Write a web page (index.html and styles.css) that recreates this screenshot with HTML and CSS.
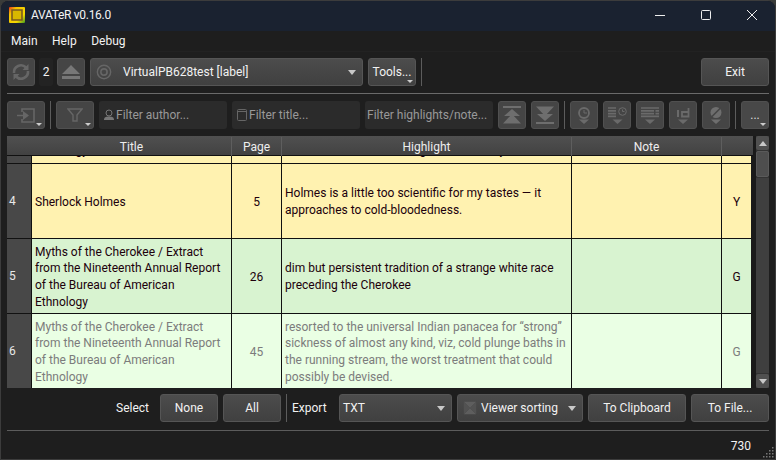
FILE: index.html
```html
<!DOCTYPE html>
<html lang="en">
<head>
    <meta charset="UTF-8">
    <meta name="viewport" content="width=device-width, initial-scale=1.0">
    <title>AVATeR v0.16.0</title>
    <link rel="stylesheet" href="styles.css">
</head>
<body>
<div class="window">
    <div class="titlebar">
        <svg class="appicon" width="16" height="16" viewBox="0 0 16 16">
            <defs>
                <linearGradient id="logo" x1="0" y1="0" x2="1" y2="1">
                    <stop offset="0" stop-color="#e8301c"/>
                    <stop offset="0.25" stop-color="#f6c400"/>
                    <stop offset="0.7" stop-color="#f4d800"/>
                    <stop offset="1" stop-color="#3f9a20"/>
                </linearGradient>
            </defs>
            <rect width="16" height="16" rx="1" fill="url(#logo)"/>
            <path d="M3 3h10v10H3z" fill="#d8b800" stroke="#7a5a20" stroke-width="1.6"/>
        </svg>
        <span class="apptitle">AVATeR v0.16.0</span>
        <div class="wincontrols">
            <svg width="12" height="12" viewBox="0 0 12 12"><path d="M1 6.5h10" stroke="#eee" fill="none"/></svg>
            <svg width="12" height="12" viewBox="0 0 12 12"><rect x="1.5" y="1.5" width="9" height="9" rx="1" stroke="#eee" fill="none"/></svg>
            <svg width="12" height="12" viewBox="0 0 12 12"><path d="M1 1l10 10M11 1L1 11" stroke="#eee" fill="none"/></svg>
        </div>
    </div>

    <div class="menubar">
        <span>Main</span>
        <span>Help</span>
        <span>Debug</span>
    </div>

    <div class="content">
        <div class="toolbar first">
            <button class="btn icon" type="button">
                <svg width="22" height="22" viewBox="0 0 22 22"><path d="M4 12a7 7 0 0 1 12-5.5M18 10a7 7 0 0 1-12 5.5" stroke="#666" stroke-width="2.6" fill="none"/><path d="M18.5 3v6h-6zM3.5 19v-6h6z" fill="#666"/></svg>
            </button>
            <span class="count">2</span>
            <button class="btn icon" type="button">
                <svg width="20" height="18" viewBox="0 0 20 18"><path d="M10 2l9 9H1zM1 13h18v3H1z" fill="#777"/></svg>
            </button>
            <button class="btn combo device" type="button">
                <svg width="16" height="16" viewBox="0 0 18 18"><circle cx="9" cy="9" r="7.5" stroke="#666" stroke-width="1.6" fill="none"/><circle cx="9" cy="9" r="3.5" stroke="#666" stroke-width="1.8" fill="none"/></svg>
                <span class="combotext">VirtualPB628test [label]</span>
                <i class="arrow"></i>
            </button>
            <button class="btn tools menu" type="button">Tools...</button>
            <span class="sep"></span>
            <button class="btn exit" type="button">Exit</button>
        </div>

        <div class="rule"></div>

        <div class="toolbar second">
            <button class="btn wide menu" type="button">
                <svg width="18" height="15" viewBox="0 0 18 15"><path d="M5 4V1h12v13H5v-3" stroke="#666" stroke-width="1.6" fill="none"/><path d="M0 7.5h6" stroke="#666" stroke-width="1.6"/><path d="M6 3l6 4.5-6 4.5z" fill="#666"/></svg>
            </button>
            <span class="sep"></span>
            <button class="btn wide menu" type="button">
                <svg width="16" height="14" viewBox="0 0 16 14"><path d="M1 1h14l-5 6v6H6V7z" stroke="#666" stroke-width="1.4" fill="none"/></svg>
            </button>
            <div class="filter">
                <svg width="12" height="12" viewBox="0 0 12 12"><circle cx="5" cy="4" r="3" stroke="#777" fill="none"/><path d="M0 11c0-3 2-3.5 5-3.5s5 .5 5 3.5z" fill="#777"/></svg>
                <span>Filter author...</span>
            </div>
            <div class="filter">
                <svg width="12" height="12" viewBox="0 0 12 12"><rect x="0.5" y="0.5" width="9" height="11" rx="1" stroke="#666" fill="none"/><path d="M1 2.5h8" stroke="#666"/></svg>
                <span>Filter title...</span>
            </div>
            <div class="filter plain"><span>Filter highlights/note...</span></div>
            <button class="btn icon" type="button">
                <svg width="20" height="20" viewBox="0 0 20 20"><path d="M1 1h18v2H1zM10 4l8 7H2zM10 9l9 9.500H1z" fill="#6e6e6e"/></svg>
            </button>
            <button class="btn icon" type="button">
                <svg width="20" height="20" viewBox="0 0 20 20"><path d="M1 17h18v2H1zM10 16l8-7H2zM10 11L19 1.500H1z" fill="#6e6e6e"/></svg>
            </button>
            <span class="sep"></span>
            <button class="btn icon" type="button">
                <svg width="20" height="20" viewBox="0 0 20 20"><circle cx="10" cy="8" r="5" stroke="#6a6a6a" stroke-width="1.8" fill="none"/><path d="M10 5v3h3" stroke="#6a6a6a" fill="none"/><path d="M5 14.500h10L10 19z" fill="#6a6a6a"/></svg>
            </button>
            <button class="btn icon" type="button">
                <svg width="20" height="20" viewBox="0 0 20 20"><path d="M1 3h8M1 5.800h8M1 8.600h8M1 11.400h8" stroke="#6a6a6a" stroke-width="1.7"/><circle cx="15.500" cy="6.500" r="3.800" stroke="#6a6a6a" fill="none"/><path d="M15.500 4.500v2h2" stroke="#6a6a6a" fill="none"/><path d="M5.500 14.500h10L10.500 19z" fill="#6a6a6a"/></svg>
            </button>
            <button class="btn icon" type="button">
                <svg width="20" height="20" viewBox="0 0 20 20"><path d="M1 3h18M1 5.800h13M15.500 5.800H19M1 8.600h13M15.500 8.600H19M1 11.400h18" stroke="#6a6a6a" stroke-width="1.7"/><path d="M5 14.500h10L10 19z" fill="#6a6a6a"/></svg>
            </button>
            <button class="btn icon" type="button">
                <svg width="20" height="20" viewBox="0 0 20 20"><path d="M5 5v7" stroke="#6a6a6a" stroke-width="2"/><path d="M15.500 3v8.500H9V7h6.500" stroke="#6a6a6a" stroke-width="1.8" fill="none"/><path d="M5 14.500h10L10 19z" fill="#6a6a6a"/></svg>
            </button>
            <button class="btn icon" type="button">
                <svg width="20" height="20" viewBox="0 0 20 20"><circle cx="10" cy="7.500" r="5.500" fill="#6e6e6e"/><path d="M5.500 12L14.500 3" stroke="#464646" stroke-width="1.600"/><path d="M5 14.500h10L10 19z" fill="#6e6e6e"/></svg>
            </button>
            <span class="sep"></span>
            <button class="btn icon menu more" type="button">...</button>
        </div>

        <div class="tablewrap">
            <div class="table">
                <div class="row head">
                    <div></div>
                    <div>Title</div>
                    <div>Page</div>
                    <div>Highlight</div>
                    <div>Note</div>
                    <div></div>
                </div>
                <div class="tbody">
                    <div class="row yellow cut">
                        <div class="num"></div>
                        <div class="cell"><span>Ethnology</span></div>
                        <div class="cell mid"></div>
                        <div class="cell"><span>that he had known nothing as to the story</span></div>
                        <div class="cell"></div>
                        <div class="cell mid"></div>
                    </div>
                    <div class="row yellow">
                        <div class="num">4</div>
                        <div class="cell">Sherlock Holmes</div>
                        <div class="cell mid">5</div>
                        <div class="cell">Holmes is a little too scientific for my tastes — it approaches to cold-bloodedness.</div>
                        <div class="cell"></div>
                        <div class="cell mid">Y</div>
                    </div>
                    <div class="row green">
                        <div class="num">5</div>
                        <div class="cell">Myths of the Cherokee / Extract from the Nineteenth Annual Report of the Bureau of American Ethnology</div>
                        <div class="cell mid">26</div>
                        <div class="cell">dim but persistent tradition of a strange white race preceding the Cherokee</div>
                        <div class="cell"></div>
                        <div class="cell mid">G</div>
                    </div>
                    <div class="row pale">
                        <div class="num">6</div>
                        <div class="cell">Myths of the Cherokee / Extract from the Nineteenth Annual Report of the Bureau of American Ethnology</div>
                        <div class="cell mid">45</div>
                        <div class="cell">resorted to the universal Indian panacea for “strong” sickness of almost any kind, viz, cold plunge baths in the running stream, the worst treatment that could possibly be devised.</div>
                        <div class="cell"></div>
                        <div class="cell mid">G</div>
                    </div>
                </div>
            </div>
            <div class="scrollbar">
                <div class="sb-btn"><i class="arrow up"></i></div>
                <div class="sb-thumb"></div>
                <div class="sb-track"></div>
                <div class="sb-btn"><i class="arrow"></i></div>
            </div>
        </div>

        <div class="toolbar bottom">
            <span class="label select">Select</span>
            <button class="btn none" type="button">None</button>
            <button class="btn none" type="button">All</button>
            <span class="sep"></span>
            <span class="label export">Export</span>
            <button class="btn combo txt" type="button"><span class="combotext">TXT</span><i class="arrow"></i></button>
            <button class="btn combo sorting" type="button">
                <svg width="14" height="14" viewBox="0 0 18 18"><path d="M1 1h16L9 9zM1 17h16L9 9z" fill="#5e5e5e"/><path d="M1 1v16l8-8zM17 1v16l-8-8z" fill="#525252"/></svg>
                <span class="combotext">Viewer sorting</span>
                <i class="arrow"></i>
            </button>
            <button class="btn clip" type="button">To Clipboard</button>
            <button class="btn tofile" type="button">To File...</button>
        </div>

        <div class="rule lower"></div>

        <div class="statusbar">
            <span>730</span>
            <svg class="grip" width="12" height="12" viewBox="0 0 12 12"><path d="M10 1h1.5v1.500H10zM7 4h1.500v1.500H7zM10 4h1.500v1.500H10zM4 7h1.500v1.500H4zM7 7h1.500v1.500H7zM10 7h1.500v1.500H10zM1 10h1.500v1.500H1zM4 10h1.500v1.500H4zM7 10h1.500v1.500H7zM10 10h1.500v1.500H10z" fill="#777"/></svg>
        </div>
    </div>
</div>
</body>
</html>
```

FILE: styles.css
```css
* {box-sizing: border-box}
html, body {margin: 0; height: 100%; overflow: hidden}
body {background: #3a3c3a; font-family: Roboto, "Noto Sans", sans-serif; font-size: 12px; color: #f2f2f2}

.window {height: 460px; border: 1px solid #3c3c3c; border-radius: 8px 8px 0 0; background: #1e1e1e; overflow: hidden}

.titlebar {height: 30px; background: #1a2230; display: flex; align-items: center; padding: 0 0 2px 8px}
.appicon {display: block}
.apptitle {margin-left: 6px; color: #f4f4f4; letter-spacing: -0.3px}
.wincontrols {margin-left: auto; display: flex; gap: 34px; padding-right: 17px}
.wincontrols svg {display: block}

.menubar {height: 21px; display: flex; align-items: center; gap: 14.5px; padding-left: 10px; background: #1e1e1e; border-bottom: 1px solid #222}

.content {padding: 0 6px}

.toolbar {display: flex; align-items: center; gap: 5px; height: 28px}
.first {margin-top: 6px}
.second {margin-top: 7px}
.bottom {margin-top: 6px}

.btn {height: 28px; padding: 0; border: 1px solid #555; border-radius: 3px; background: linear-gradient(#4c4c4c, #404040); color: #f2f2f2; font: inherit; display: flex; align-items: center; justify-content: center; position: relative}
.icon {width: 28px; border-color: #505050; background: #454545}
.wide {width: 38px; border-color: #505050; background: #454545}
.tools {width: 48px}
.exit {width: 68px; margin-left: auto}
.none {width: 58px}
.clip {width: 98px}
.tofile {width: 78px}
.more {color: #ddd; align-items: flex-end; padding-bottom: 6px; background: #484848}

.menu::after {content: ""; position: absolute; right: 2px; bottom: 2px; border: 3px solid transparent; border-top-color: #ccc; border-bottom: 0}

.combo {justify-content: flex-start; padding: 0 6px 0 3px}
.device {width: 273px; padding-left: 5px}
.device .combotext {margin-left: 11px}
.txt {width: 113px}
.sorting {width: 126px; padding-left: 5px}
.sorting .combotext {margin-left: 4px}
.arrow {margin-left: auto; display: block; width: 0; height: 0; border: 4px solid transparent; border-top: 5px solid #c8c8c8; border-bottom: 0}
.arrow.up {border-top: 0; border-bottom: 5px solid #c8c8c8}
.sb-btn .arrow {margin: 0}

.count {width: 14px; height: 28px; margin: 0 -1px; background: #232323; border-radius: 2px; display: flex; align-items: center; justify-content: center}
.sep {width: 1px; height: 28px; background: #5c5c5c; flex: none}

.rule {height: 1px; background: #6a6a6a; margin-top: 7px}
.rule.lower {margin-top: 8px; background: #5c5c5c}

.filter {width: 128px; height: 28px; background: #2b2b2b; border-radius: 3px; display: flex; align-items: center; padding-left: 5px; color: #999}
.filter svg {flex: none}
.filter.plain {padding-left: 2px}

.tablewrap {display: flex; margin-top: 7px; height: 252px; background: #1a1a1a}
.table {width: 746px; flex: none}

.row {display: grid; grid-template-columns: 25px 200px 50px 290px 150px 29px}
.head {width: 746px; height: 20px; grid-template-columns: 25px 200px 50px 290px 150px 31px; background: linear-gradient(#505050, #424242); border-bottom: 1px solid #111; color: #eee; text-align: center; line-height: 20px; padding-top: 1px}
.head div {border-right: 1px solid #5e5e5e}
.head div:first-child {border-right: 0}
.head div:last-child {border-right: 0}

.tbody {width: 744px; height: 232px; overflow: hidden}
.tbody .row {height: 75px; color: #20000c}
.tbody .row > div {border-bottom: 1px solid #111; border-right: 1px solid #111}
.tbody .row > div:last-child {border-right: 0}
.tbody .cut.row {height: 8px}
.tbody .cut .cell {align-items: flex-end; overflow: hidden; padding-top: 0}
.cut .cell span {display: block; margin-bottom: 4px; white-space: nowrap}

.num {background: #484848; color: #e8e8e8; display: flex; align-items: center; padding-left: 2px}
.cell {display: flex; align-items: center; padding: 2px 3px 0; line-height: 16.7px}
.mid {justify-content: center}
.yellow {background: #fff2b0}
.green {background: #d8f3d0}
.pale {background: #eaffe4}
.pale .cell {color: #7c7c7c}

.scrollbar {width: 13px; margin-left: 3px; display: flex; flex-direction: column; background: #333; gap: 1px}
.sb-btn {height: 14px; background: #505050; display: flex; align-items: center; justify-content: center; border-radius: 2px; flex: none}
.sb-thumb {height: 26px; background: #4e4e4e; border: 1px solid #5a5a5a; border-radius: 2px; flex: none}
.sb-track {flex: 1; background: #3f3f3f}

.select {margin-left: auto; width: 39px}
.export {width: 42px}

.statusbar {height: 29px; display: flex; justify-content: flex-end; align-items: center; position: relative; padding-right: 18px}
.grip {position: absolute; right: -5px; bottom: 2px}
```
